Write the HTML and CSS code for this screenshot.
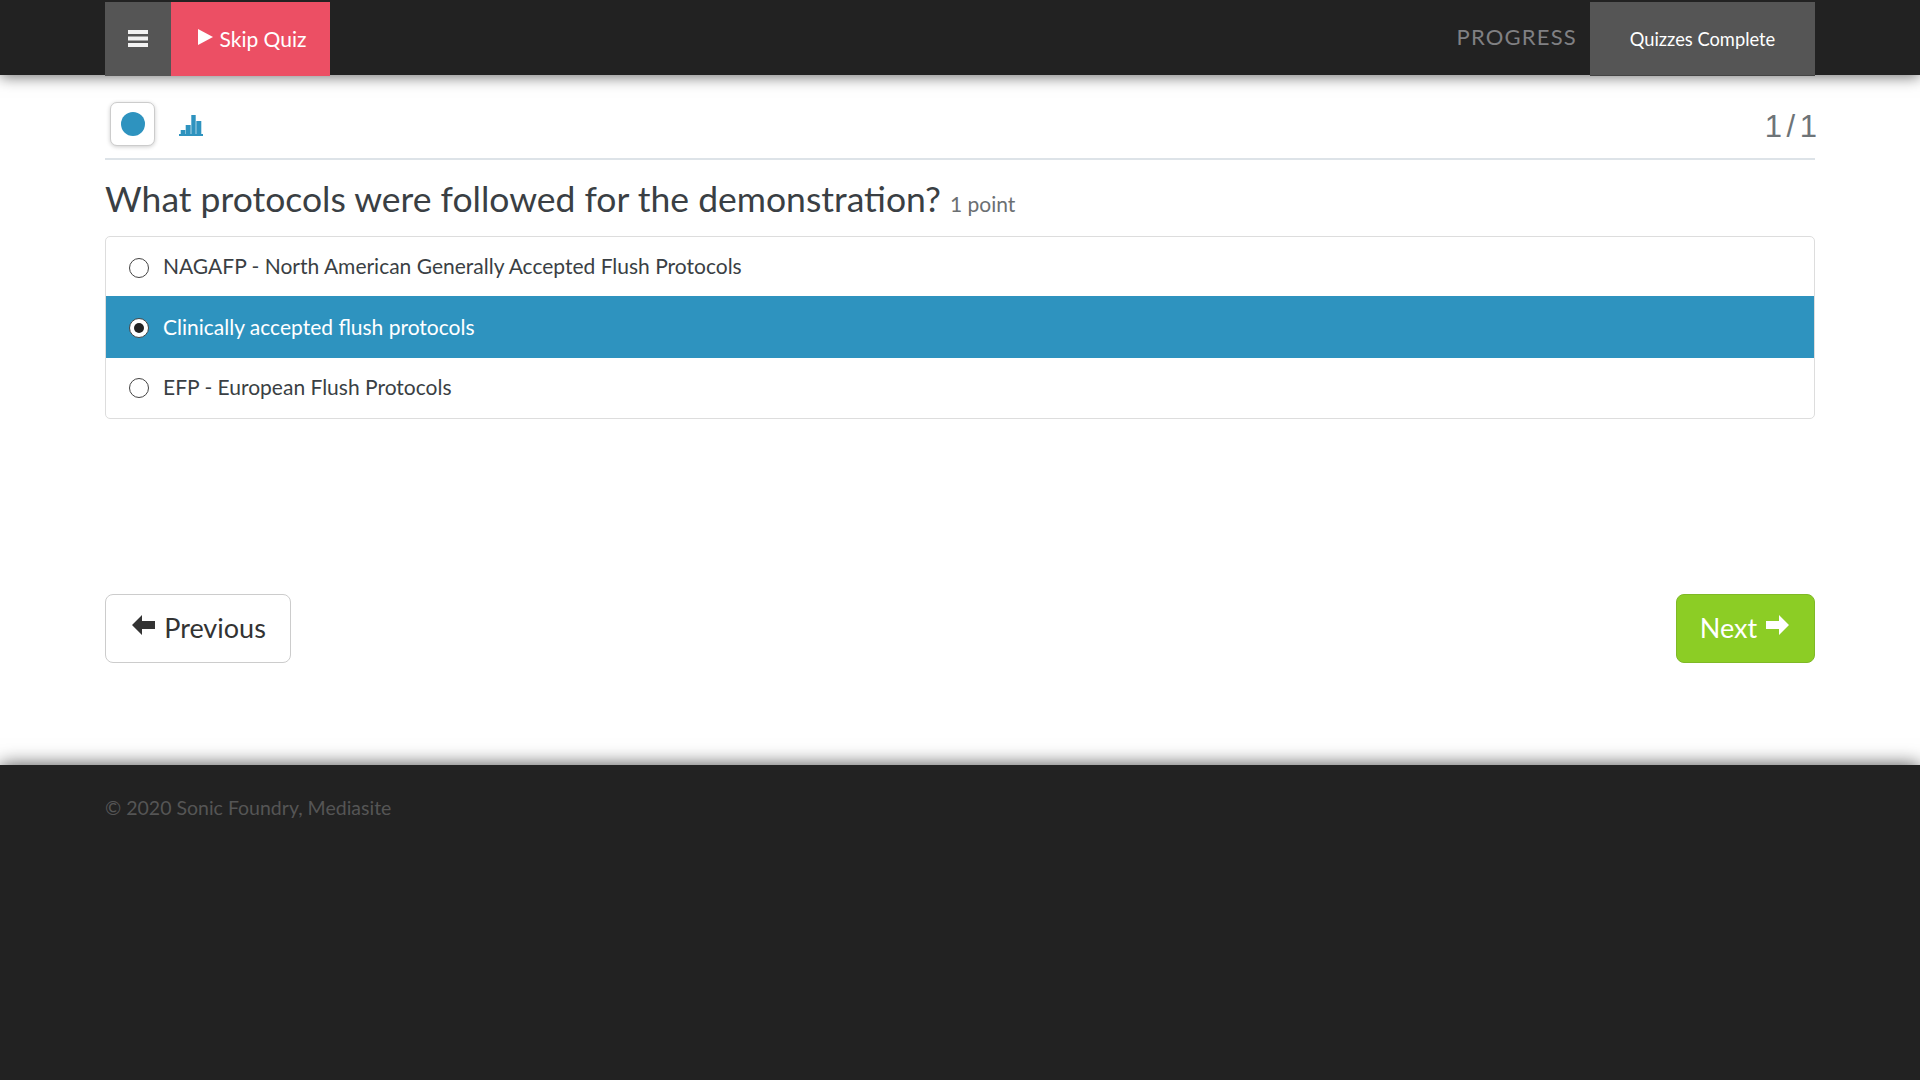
FILE: index.html
```html
<!DOCTYPE html>
<html lang="en">
<head>
<meta charset="utf-8">
<title>Quiz</title>
<link rel="stylesheet" href="styles.css">
</head>
<body>
<header class="topbar">
  <div class="wrap topbar-inner">
    <div class="nav-left">
      <button class="menu-btn" aria-label="Menu">
        <svg width="20" height="17" viewBox="0 0 20 17"><path fill="#f2f2f2" d="M0 0h20v4H0zM0 6.500h20v4H0zM0 13h20v4H0z"/></svg>
      </button>
      <button class="skip-btn">
        <svg width="15" height="16" viewBox="0 0 15 16"><path fill="#fff" d="M0 0l15 8L0 16z"/></svg>
        <span>Skip Quiz</span>
      </button>
    </div>
    <div class="nav-right">
      <span class="progress-label">PROGRESS</span>
      <div class="progress-box">Quizzes Complete</div>
    </div>
  </div>
</header>
<main class="content">
  <div class="wrap">
    <div class="tabs">
      <div class="tab-icons">
        <div class="tab-active"><span class="dot"></span></div>
        <svg class="chart" width="24" height="21" viewBox="0 0 24 21"><path fill="#2e93bf" d="M1.700 15H6.300V19H1.700zM6.700 10H11.700V19H6.700zM12.300 0H16.700V19H12.300zM17.300 6H22.300V19H17.300zM0 19H24V21H0z"/></svg>
      </div>
      <div class="counter">1 / 1</div>
    </div>
    <h1 class="question">What protocols were followed for the demonstration? <small>1 point</small></h1>
    <div class="answers">
      <label class="answer"><span class="radio"></span>NAGAFP - North American Generally Accepted Flush Protocols</label>
      <label class="answer selected"><span class="radio on"></span>Clinically accepted flush protocols</label>
      <label class="answer"><span class="radio"></span>EFP - European Flush Protocols</label>
    </div>
    <div class="actions">
      <button class="btn prev">
        <svg width="23" height="20" viewBox="0 0 23 20"><path fill="#333" d="M0 10L10 0v6h13v8H10v6z"/></svg>
        Previous
      </button>
      <button class="btn next">
        Next
        <svg width="23" height="20" viewBox="0 0 23 20"><path fill="#fff" d="M23 10L13 0v6H0v8h13v6z"/></svg>
      </button>
    </div>
  </div>
</main>
<footer class="footer">
  <div class="wrap">© 2020 Sonic Foundry, Mediasite</div>
</footer>
</body>
</html>
```
FILE: styles.css
```css
* { box-sizing: border-box; }
html, body { height: 100%; }
body {
  margin: 0;
  display: flex;
  flex-direction: column;
  min-height: 1080px;
  background: #222;
  color: #3a3f44;
  font-family: Lato, "Liberation Sans", sans-serif;
}
.wrap { width: 1710px; margin-left: 105px; }
button { font-family: inherit; border: 0; cursor: pointer; }
.topbar {
  height: 75px;
  background: #222;
  box-shadow: 0 2px 14px rgba(0,0,0,.55);
  position: relative;
  z-index: 2;
}
.topbar-inner { display: flex; justify-content: space-between; padding-top: 2px; }
.nav-left, .nav-right { display: flex; height: 74px; }
.menu-btn {
  width: 66px;
  background: #555;
  display: flex;
  align-items: center;
  justify-content: center;
  padding: 0 0 2px;
}
.skip-btn {
  width: 159px;
  background: #ec4f64;
  color: #fff;
  font-size: 21px;
  display: flex;
  align-items: center;
  justify-content: center;
  gap: 7px;
  padding: 0 0 1px 3px;
}
.skip-btn svg { margin-top: -4px; }
.nav-right { align-items: stretch; }
.progress-label {
  color: #808083;
  font-size: 22px;
  font-weight: 400;
  letter-spacing: 1.200px;
  margin-right: 13px;
  padding-top: 21px;
}
.progress-box {
  width: 225px;
  background: #555;
  border-bottom: 1px solid #444;
  color: #fff;
  font-size: 18.300px;
  display: flex;
  align-items: center;
  justify-content: center;
}
.content {
  background: #fff;
  height: 690px;
}
.tabs {
  height: 85px;
  border-bottom: 2px solid #dde3e8;
  display: flex;
  justify-content: space-between;
  padding-top: 27px;
}
.tab-icons { display: flex; align-items: flex-start; padding-left: 5px; }
.tab-active {
  width: 45px;
  height: 44px;
  background: #fff;
  border: 1px solid #ccc;
  border-radius: 7px;
  box-shadow: 0 1px 4px rgba(0,0,0,.2);
  display: flex;
  align-items: center;
  justify-content: center;
}
.dot { width: 24px; height: 24px; border-radius: 50%; background: #2e93bf; }
.chart { margin: 13px 0 0 24px; }
.counter {
  font-family: "Liberation Sans", sans-serif;
  font-size: 31px;
  letter-spacing: -2px;
  color: #6e7478;
  line-height: 44px;
  padding-top: 3px;
}
.question {
  margin: 0;
  padding: 17px 0 0;
  height: 76px;
  font-size: 35.500px;
  font-weight: 400;
  line-height: 44px;
  color: #3a3f44;
}
.question small { font-size: 21px; color: #6b6f72; }
.answers {
  border: 1px solid #ddd;
  border-radius: 5px;
  height: 183px;
  overflow: hidden;
}
.answer {
  height: 59px;
  display: flex;
  align-items: center;
  padding: 0 0 2px 23px;
  font-size: 21px;
  color: #3a3f44;
}
.answer.selected { height: 62px; background: #2e93bf; color: #fff; }
.answer:last-child { height: 60px; padding-bottom: 4px; }
.radio {
  width: 20px;
  height: 20px;
  border: 1.500px solid #444;
  border-radius: 50%;
  background: #fff;
  margin-right: 14px;
  margin-top: 4px;
  display: flex;
  align-items: center;
  justify-content: center;
}
.radio.on::after { content: ""; width: 10px; height: 10px; border-radius: 50%; background: #222; }
.actions { display: flex; justify-content: space-between; margin-top: 175px; }
.btn {
  height: 69px;
  border-radius: 8px;
  font-size: 27px;
  display: flex;
  align-items: center;
  justify-content: center;
  gap: 9px;
  padding: 0 0 2px;
}
.btn svg { margin-top: -6px; }
.prev { width: 186px; background: #fff; border: 1px solid #ccc; color: #333; padding-left: 2px; }
.next { width: 139px; background: #8ccd25; border: 1px solid #7fb926; color: #fff; padding-right: 2px; }
.footer {
  flex: 1;
  background: #222;
  color: #555;
  font-size: 19.500px;
  padding-top: 31px;
  box-shadow: 0 0 18px rgba(0,0,0,.7);
  position: relative;
}
```
